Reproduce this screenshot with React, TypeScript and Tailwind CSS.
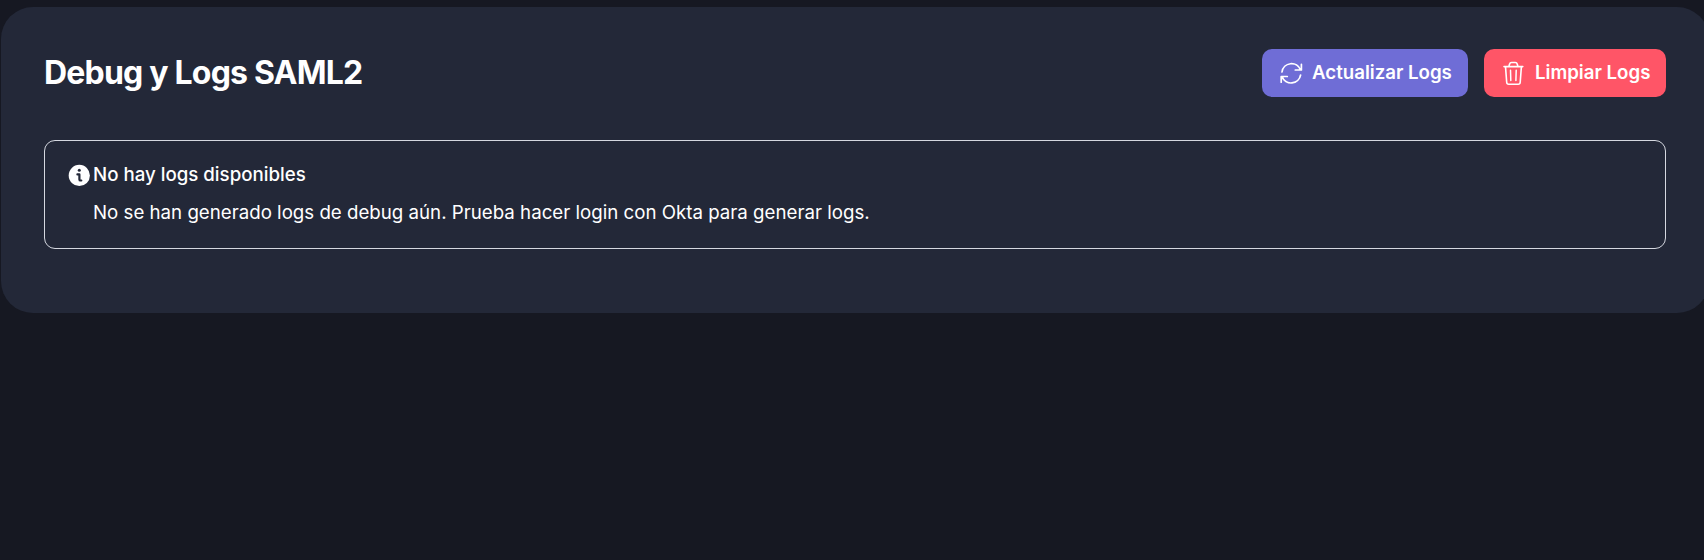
import React from "react";

function RefreshIcon() {
  return (
    <svg viewBox="0 0 24 24" fill="none" stroke="currentColor" strokeWidth="1.7" strokeLinecap="round" strokeLinejoin="round" className="mr-[9px] size-6 overflow-visible">
      <path d="M3 11A9.6 9.6 0 0 1 21.5 8.9M22.4 3.3v5.7h-6.1M21.6 14A9.6 9.6 0 0 1 3.1 15.6M2.2 21.2v-5.7h6.1" />
    </svg>
  );
}

function TrashIcon() {
  return (
    <svg viewBox="0 0 24 24" fill="none" stroke="currentColor" strokeWidth="1.6" strokeLinecap="round" strokeLinejoin="round" className="mr-[10px] size-6 overflow-visible">
      <path d="M3 5.6h18.8M7.8 5.6 8.5 3.2q.5-1.7 2-1.7h3.8q1.5 0 2 1.7l.7 2.4M4.5 5.6l1.2 15.7q.1 2 2 2h9.5q1.9 0 2-2l1.2-15.7" />
      <path d="m9.5 9.3.3 10.3M15.2 9.3l-.3 10.3" strokeWidth="1.5" />
    </svg>
  );
}

function InfoIcon() {
  return (
    <svg viewBox="0 0 22 22" fill="none" className="-ml-px mr-[3px] mt-[4px] size-[22px]">
      <circle cx="11.3" cy="11.4" r="10.6" fill="currentColor" />
      <circle cx="11.3" cy="6.3" r="1.5" fill="#232838" />
      <path d="M9.4 10.4h2v5q0 1.1 1.2 1.1h.7" stroke="#232838" strokeWidth="2.2" strokeLinejoin="round" strokeLinecap="round" />
    </svg>
  );
}

export default function App() {
  return (
    <div className="h-[560px] overflow-hidden bg-[#161822] pl-px pt-[7px] font-['Inter',sans-serif] text-white">
      <main className="h-[306px] w-[1708px] rounded-[32px] bg-[#232838] px-[43px] pt-[42px]">
        <header className="flex h-12 items-center justify-between">
          <h1 className="text-[32px] font-bold leading-12 tracking-[-0.8px]">Debug y Logs SAML2</h1>
          <div className="flex gap-4">
            <button className="flex h-12 w-[206px] items-center rounded-[10px] bg-[#6f6dd6] pl-[17px] text-[18.67px] font-semibold whitespace-nowrap">
              <RefreshIcon />
              <span>Actualizar Logs</span>
            </button>
            <button className="flex h-12 w-[182px] items-center rounded-[10px] bg-[#ff5567] pl-[17px] text-[18.67px] font-semibold whitespace-nowrap">
              <TrashIcon />
              <span>Limpiar Logs</span>
            </button>
          </div>
        </header>
        <section className="mt-[43px] flex h-[109px] rounded-[11px] border border-[#d5d8e0] pl-6 pt-[19px]">
          <InfoIcon />
          <div className="-mt-px text-[18.69px] leading-8">
            <h2 className="font-medium">No hay logs disponibles</h2>
            <p className="mt-[6px]">No se han generado logs de debug aún. Prueba hacer login con Okta para generar logs.</p>
          </div>
        </section>
      </main>
    </div>
  );
}
